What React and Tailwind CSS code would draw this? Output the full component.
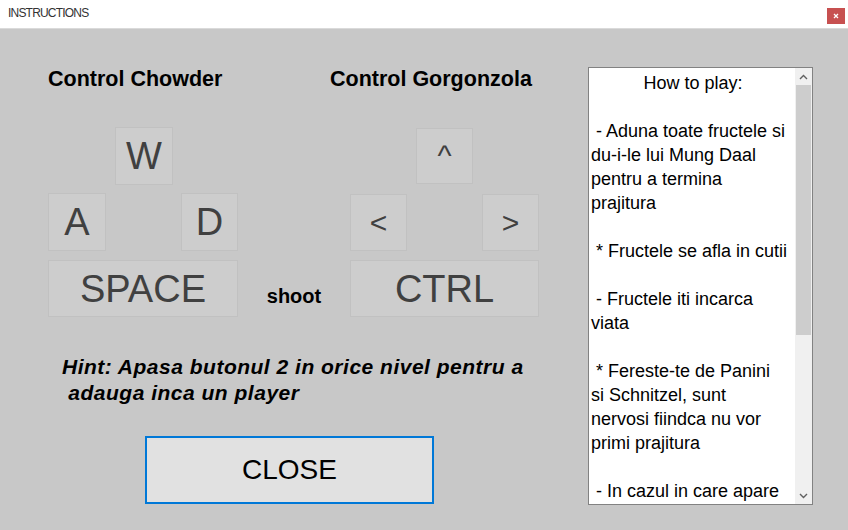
import React from "react";

const F = { fontFamily: '"Liberation Sans", Arial, sans-serif' };

function Key({ className = "", children, textClass = "text-[38px]" }) {
  return (
    <div
      className={`flex items-center justify-center border border-[#c1c1c1] bg-[#cdcdcd] text-[#404040] leading-none ${textClass} ${className}`}
    >
      {children}
    </div>
  );
}

function Chevron({ up }) {
  return (
    <svg width="9" height="6" viewBox="0 0 9 6">
      <polyline
        points={up ? "1,5 4.5,1.5 8,5" : "1,1 4.5,4.5 8,1"}
        fill="none"
        stroke="#606060"
        strokeWidth="1.4"
      />
    </svg>
  );
}

const lines = [
  "",
  " - Aduna toate fructele si",
  "du-i-le lui Mung Daal",
  "pentru a termina",
  "prajitura",
  "",
  " * Fructele se afla in cutii",
  "",
  " - Fructele iti incarca",
  "viata",
  "",
  " * Fereste-te de Panini",
  "si Schnitzel, sunt",
  "nervosi fiindca nu vor",
  "primi prajitura",
  "",
  " - In cazul in care apare",
];

export default function App() {
  return (
    <div className="w-[848px] h-[530px] flex flex-col overflow-hidden bg-white" style={F}>
      {/* Title bar */}
      <div className="h-[29px] shrink-0 flex items-start justify-between bg-white border-b border-[#dadada] pl-[8px] pr-[3px]">
        <span className="mt-[6px] text-[12px] leading-[14px] tracking-[-0.8px] text-[#333]">INSTRUCTIONS</span>
        <div className="mt-[8px] w-[18px] h-[16px] bg-[#c75050] flex items-center justify-center">
          <svg width="6" height="6" viewBox="0 0 6 6">
            <path d="M1 1 L5 5 M5 1 L1 5" stroke="#fff" strokeWidth="1.3" />
          </svg>
        </div>
      </div>

      {/* Main */}
      <div className="flex-1 bg-[#c8c8c8] flex pt-[38px]">
        {/* Left column */}
        <div className="w-[588px] shrink-0 pl-[48px] flex flex-col">
          <div className="flex h-[24px] items-center text-[21.5px] font-bold text-black leading-[24px]">
            <div className="w-[282px]">Control Chowder</div>
            <div>Control Gorgonzola</div>
          </div>

          {/* Row 1 */}
          <div className="flex mt-[36px] h-[58px]">
            <Key className="ml-[67px] w-[58px] h-[58px]">W</Key>
            <Key className="ml-[243px] mt-[1px] w-[57px] h-[56px]" textClass="text-[30px]">^</Key>
          </div>

          {/* Row 2 */}
          <div className="flex mt-[8px] h-[58px]">
            <Key className="w-[58px] h-[58px]">A</Key>
            <Key className="ml-[75px] w-[57px] h-[58px]">D</Key>
            <Key className="ml-[112px] mt-[1px] w-[57px] h-[57px]" textClass="text-[30px]">&lt;</Key>
            <Key className="ml-[75px] mt-[1px] w-[57px] h-[57px]" textClass="text-[30px]">&gt;</Key>
          </div>

          {/* Row 3 */}
          <div className="flex mt-[9px] h-[57px]">
            <Key className="w-[190px] h-[57px]">SPACE</Key>
            <div className="w-[112px] flex items-center justify-center pt-[14px] text-[20px] font-bold text-black">
              shoot
            </div>
            <Key className="w-[189px] h-[57px]">CTRL</Key>
          </div>

          {/* Hint */}
          <div className="mt-[37px] pl-[14px] text-[21px] tracking-[0.5px] font-bold italic leading-[26px] text-black whitespace-pre">
            <div>Hint: Apasa butonul 2 in orice nivel pentru a</div>
            <div> adauga inca un player</div>
          </div>

          {/* Close button */}
          <div className="mt-[30px] ml-[97px] w-[289px] h-[68px] border-2 border-[#0078d7] bg-[#e1e1e1] flex items-center justify-center text-[28px] text-black">
            CLOSE
          </div>
        </div>

        {/* Listbox */}
        <div className="w-[225px] h-[438px] shrink-0 border border-[#828282] bg-white flex">
          <div className="flex-1 overflow-hidden pt-[3px] pl-[2px] text-[18px] leading-[24px] text-black whitespace-pre">
            <div className="text-center">How to play:</div>
            {lines.map((l, i) => (
              <div key={i} className="h-[24px]">{l}</div>
            ))}
          </div>
          <div className="w-[17px] bg-[#f0f0f0] flex flex-col">
            <div className="h-[17px] flex items-center justify-center">
              <Chevron up />
            </div>
            <div className="flex-1 px-[1px]">
              <div className="h-[250px] bg-[#cdcdcd]" />
            </div>
            <div className="h-[17px] flex items-center justify-center">
              <Chevron />
            </div>
          </div>
        </div>
      </div>
    </div>
  );
}
